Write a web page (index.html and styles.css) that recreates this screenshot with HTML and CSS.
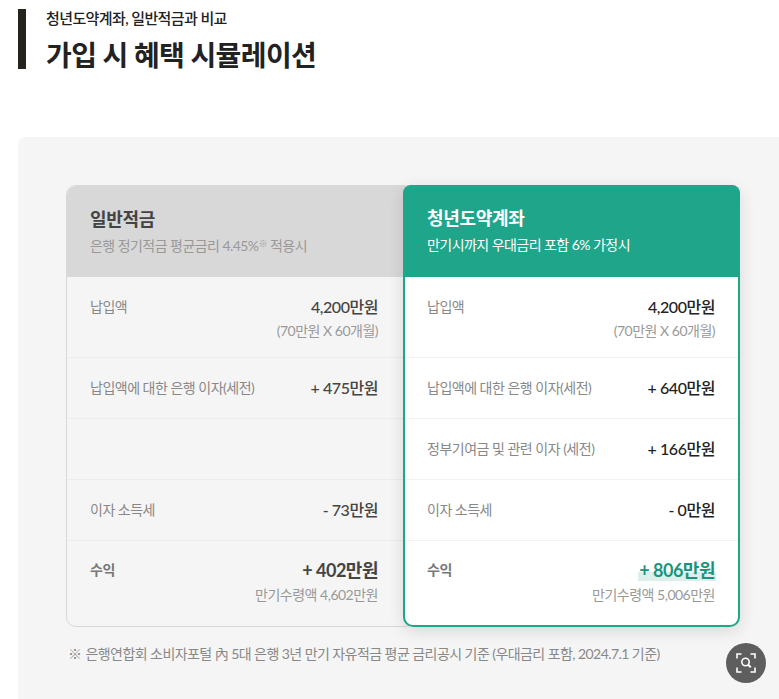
FILE: index.html
```html
<!DOCTYPE html>
<html lang="ko">
<head>
<meta charset="utf-8">
<title>가입 시 혜택 시뮬레이션</title>
<link rel="stylesheet" href="styles.css">
</head>
<body>
<header class="heading">
  <p class="eyebrow">청년도약계좌, 일반적금과 비교</p>
  <h1 class="title">가입 시 혜택 시뮬레이션</h1>
</header>
<main class="panel">
  <div class="compare">
    <section class="card card-plain">
      <div class="card-head">
        <h2 class="card-title">일반적금</h2>
        <p class="card-sub">은행 정기적금 평균금리 4.45%<sup class="mark">※</sup> 적용시</p>
      </div>
      <div class="row row-first">
        <span class="label">납입액</span>
        <div class="values"><b class="amount">4,200만원</b><span class="note">(70만원 X 60개월)</span></div>
      </div>
      <div class="row">
        <span class="label">납입액에 대한 은행 이자(세전)</span>
        <div class="values"><b class="amount">+ 475만원</b></div>
      </div>
      <div class="row"></div>
      <div class="row">
        <span class="label">이자 소득세</span>
        <div class="values"><b class="amount">- 73만원</b></div>
      </div>
      <div class="row row-last">
        <span class="label label-strong">수익</span>
        <div class="values"><b class="amount amount-big">+ 402만원</b><span class="note note-tight">만기수령액 4,602만원</span></div>
      </div>
    </section>
    <section class="card card-accent">
      <div class="card-head">
        <h2 class="card-title">청년도약계좌</h2>
        <p class="card-sub">만기시까지 우대금리 포함 6% 가정시</p>
      </div>
      <div class="row row-first">
        <span class="label">납입액</span>
        <div class="values"><b class="amount">4,200만원</b><span class="note">(70만원 X 60개월)</span></div>
      </div>
      <div class="row">
        <span class="label">납입액에 대한 은행 이자(세전)</span>
        <div class="values"><b class="amount">+ 640만원</b></div>
      </div>
      <div class="row">
        <span class="label">정부기여금 및 관련 이자 (세전)</span>
        <div class="values"><b class="amount">+ 166만원</b></div>
      </div>
      <div class="row">
        <span class="label">이자 소득세</span>
        <div class="values"><b class="amount">- 0만원</b></div>
      </div>
      <div class="row row-last">
        <span class="label label-strong">수익</span>
        <div class="values"><b class="amount amount-big amount-hl">+ 806만원</b><span class="note note-tight">만기수령액 5,006만원</span></div>
      </div>
    </section>
  </div>
  <p class="footnote"><span class="footnote-mark">※</span>은행연합회 소비자포털 內 5대 은행 3년 만기 자유적금 평균 금리공시 기준 (우대금리 포함, 2024.7.1 기준)</p>
</main>
<button class="fab" type="button" aria-label="확대">
  <svg width="20" height="20" viewBox="0 0 20 20" fill="none" stroke="#fff" stroke-width="1.6">
    <path d="M1 5.5V1H5.5M14.5 1H19V5.5M19 14.5V19H14.5M5.5 19H1V14.5"/>
    <circle cx="9.5" cy="9" r="3.7"/>
    <path d="M12.2 11.8L14.8 14.4" stroke-width="2"/>
  </svg>
</button>
</body>
</html>
```
FILE: styles.css
```css
* { box-sizing: border-box; }
html, body { margin: 0; padding: 0; }
body {
  width: 779px;
  height: 699px;
  overflow: hidden;
  background: #fff;
  font-family: Lato, "Noto Sans CJK KR", sans-serif;
  color: #222;
  letter-spacing: -0.4px;
}
p, h1, h2 { margin: 0; }
.heading {
  margin: 9px 0 0 18px;
  height: 60px;
  border-left: 8px solid #26231f;
  padding-left: 20px;
}
.eyebrow {
  font-size: 15px;
  line-height: 18px;
  font-weight: 500;
  color: #222;
  letter-spacing: -0.6px;
}
.title {
  margin-top: 10px;
  font-size: 28px;
  line-height: 36px;
  font-weight: 700;
  color: #222;
  letter-spacing: -0.6px;
}
.panel {
  margin: 68px 0 0 18px;
  height: 562px;
  padding: 48px 39px 0 48px;
  background: #f5f5f5;
  border-radius: 8px 0 0 0;
}
.compare { display: flex; }
.card {
  display: flex;
  flex-direction: column;
  height: 442px;
  border-radius: 10px;
  overflow: hidden;
}
.card-plain {
  flex: none;
  width: 348px;
  border: 1px solid #d8d8d8;
}
.card-accent {
  flex: none;
  width: 337px;
  margin-left: -11px;
  position: relative;
  border: 2px solid #1fa58a;
  background: #fff;
  box-shadow: 0 4px 16px rgba(0, 0, 0, .12);
  overflow: visible;
}
.card-head {
  height: 91px;
  padding: 21px 23px 0;
  background: #d8d8d8;
}
.card-accent .card-head {
  margin: -2px -2px 0;
  padding: 21px 24px 0;
  background: #1fa58a;
  border-radius: 8px 8px 0 0;
  height: 92px;
}
.card-title {
  font-size: 18px;
  line-height: 24px;
  font-weight: 700;
  color: #444;
  letter-spacing: -0.3px;
}
.card-accent .card-title { color: #fff; }
.card-sub {
  margin-top: 5px;
  font-size: 14px;
  line-height: 20px;
  color: #999;
  letter-spacing: -0.55px;
}
.card-accent .card-sub { color: #fff; }
.mark { font-size: 9px; line-height: 0; vertical-align: 4px; }
.row {
  flex: none;
  display: flex;
  justify-content: space-between;
  align-items: flex-start;
  height: 61px;
  padding: 20px 25px 0 23px;
  border-top: 1px solid #ededed;
}
.card-plain .row { padding-right: 35px; }
.card-accent .row { padding: 20px 23px 0 22px; border-top-color: #f2f2f2; }
.row-first { height: 80px; border-top: 0; }
.card-accent .row-first { height: 80px; border-top: 0; }
.row-last { flex: 1; }
.card-plain .row-last, .card-accent .row-last { padding-top: 19px; }
.label {
  font-size: 14px;
  line-height: 20px;
  color: #888;
  letter-spacing: -0.5px;
}
.label-strong { font-weight: 700; color: #777; }
.values {
  display: flex;
  flex-direction: column;
  align-items: flex-end;
}
.amount {
  font-size: 16px;
  line-height: 20px;
  font-weight: 500;
  color: #444;
  letter-spacing: -0.45px;
}
.card-accent .amount { color: #222; }
.amount-big { font-size: 18px; line-height: 20px; font-weight: 700; letter-spacing: -0.5px; }
.card-accent .amount-hl {
  color: #1a957c;
  padding: 0 1px 1px;
  margin: 0 -1px -1px;
  background: linear-gradient(transparent 12px, #dcefea 12px);
}
.note {
  margin-top: 4px;
  font-size: 14px;
  line-height: 20px;
  color: #999;
  letter-spacing: -0.5px;
}
.note-tight { margin-top: 5px; }
.footnote {
  margin-top: 17px;
  padding-left: 2px;
  font-size: 14px;
  line-height: 20px;
  color: #888;
  letter-spacing: -0.56px;
}
.footnote-mark { margin-right: 4px; }
.fab {
  position: fixed;
  left: 726px;
  top: 643px;
  width: 40px;
  height: 40px;
  padding: 0;
  border: 0;
  border-radius: 50%;
  background: #5e5e5e;
  display: flex;
  align-items: center;
  justify-content: center;
}
```
